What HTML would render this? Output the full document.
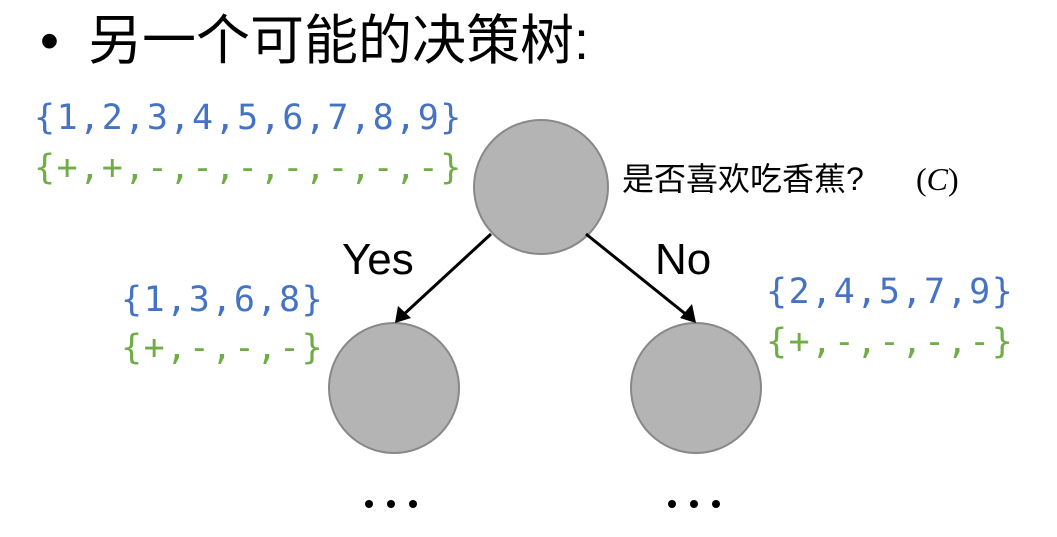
<!DOCTYPE html>
<html><head><meta charset="utf-8"><style>
body{margin:0;width:1057px;height:537px;background:#fff;position:relative;overflow:hidden;font-family:"Liberation Sans","Noto Sans CJK SC",sans-serif}
.t{position:absolute;white-space:nowrap;line-height:1}
.m{font-family:"DejaVu Sans Mono","Liberation Mono",monospace;font-size:35px;letter-spacing:1.5px}
.b{color:#4472c4}.g{color:#70ad47}
</style></head><body>
<div class="t" style="left:40px;top:14px;font-size:54px;">•</div>
<div class="t" style="left:88px;top:14px;font-size:54px;letter-spacing:0px;">另一个可能的决策树:</div>
<div class="t m b" style="left:34px;top:101px;">{1,2,3,4,5,6,7,8,9}</div>
<div class="t m g" style="left:34px;top:151px;">{+,+,-,-,-,-,-,-,-}</div>
<div class="t m b" style="left:121px;top:283px;">{1,3,6,8}</div>
<div class="t m g" style="left:121px;top:331px;">{+,-,-,-}</div>
<div class="t m b" style="left:766px;top:275px;">{2,4,5,7,9}</div>
<div class="t m g" style="left:766px;top:325px;">{+,-,-,-,-}</div>
<div class="t" style="left:622px;top:163px;font-size:32px;">是否喜欢吃香蕉?</div>
<div class="t" style="left:916px;top:163px;font-size:32px;font-family:'Liberation Serif',serif;">(<i>C</i>)</div>
<div class="t" style="left:342px;top:238px;font-size:44px;">Yes</div>
<div class="t" style="left:655px;top:238px;font-size:44px;">No</div>
<svg width="1057" height="537" style="position:absolute;left:0;top:0">
<circle cx="541" cy="187" r="67" fill="#b4b4b4" stroke="#888" stroke-width="2"/>
<circle cx="394" cy="388" r="65" fill="#b4b4b4" stroke="#888" stroke-width="2"/>
<circle cx="696" cy="388" r="65" fill="#b4b4b4" stroke="#888" stroke-width="2"/>
<line x1="491" y1="234" x2="402" y2="316" stroke="#000" stroke-width="3"/>
<path d="M395,323 L398,306 L411,318 Z" fill="#000"/>
<line x1="586" y1="234" x2="688" y2="316" stroke="#000" stroke-width="3"/>
<path d="M696,323 L680,318 L692,304 Z" fill="#000"/>
<circle cx="369" cy="504" r="4" fill="#000"/><circle cx="391" cy="504" r="4" fill="#000"/><circle cx="413" cy="504" r="4" fill="#000"/>
<circle cx="672" cy="504" r="4" fill="#000"/><circle cx="694" cy="504" r="4" fill="#000"/><circle cx="716" cy="504" r="4" fill="#000"/>
</svg>
</body></html>
